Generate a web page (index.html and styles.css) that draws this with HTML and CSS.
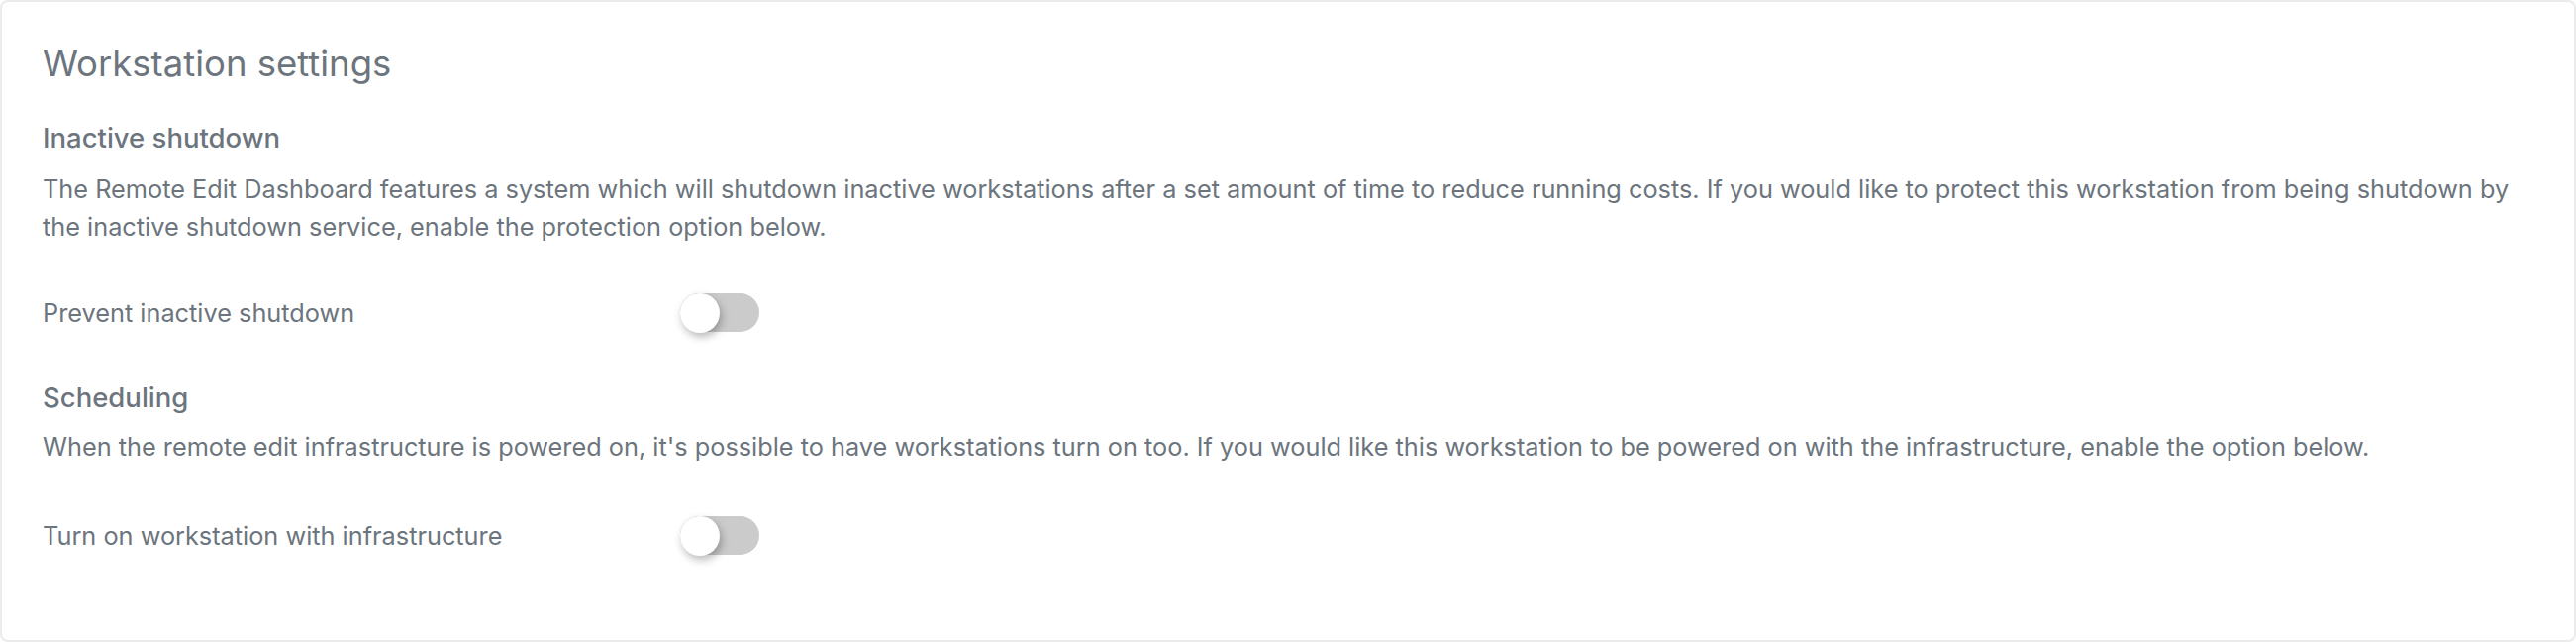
FILE: index.html
```html
<!DOCTYPE html>
<html lang="en">
<head>
  <meta charset="UTF-8" />
  <meta name="viewport" content="width=device-width, initial-scale=1.0"/>
  <title>Workstation settings</title>
  <link rel="stylesheet" href="styles.css">
</head>
<body>
  <div class="card">
    <h2 class="card-title">Workstation settings</h2>

    <!-- Inactive shutdown -->
    <h3 class="section-title">Inactive shutdown</h3>
    <p class="desc">The Remote Edit Dashboard features a system which will shutdown inactive workstations after a set amount of time to reduce running costs. If you would like to protect this workstation from being shutdown by the inactive shutdown service, enable the protection option below.</p>
    <div class="option">
      <label for="prevent-shutdown">Prevent inactive shutdown</label>
      <label class="switch">
        <input type="checkbox" id="prevent-shutdown">
        <span class="slider"></span>
      </label>
    </div>

    <!-- Scheduling -->
    <h3 class="section-title second">Scheduling</h3>
    <p class="desc short">When the remote edit infrastructure is powered on, it's possible to have workstations turn on too. If you would like this workstation to be powered on with the infrastructure, enable the option below.</p>
    <div class="option last">
      <label for="turn-on">Turn on workstation with infrastructure</label>
      <label class="switch">
        <input type="checkbox" id="turn-on">
        <span class="slider"></span>
      </label>
    </div>
  </div>
</body>
</html>
```

FILE: styles.css
```css
body { margin: 0; font-family: Inter, "Noto Sans", Arial, sans-serif; color: #6c757d; background: #fff; }
.card { height: 648px; box-sizing: border-box; border: 2px solid #ebebeb; border-radius: 8px; padding: 42px 41px 0; }
.card-title { font-size: 36.5px; line-height: 41px; font-weight: 400; margin: 0 0 35px; }
.section-title { font-size: 27.5px; line-height: 38px; font-weight: 500; margin: 0; }
.section-title.second { margin-top: 47px; }
.desc { font-size: 25.3px; line-height: 38px; margin: 14px 0 0; }
.desc.short { margin-top: 12px; }
.option { display: grid; grid-template-columns: 644px 1fr; align-items: center; height: 40px; margin-top: 47px; font-size: 25.3px; }
.option.last { margin-top: 50px; }
/* Toggle */
.switch { position: relative; display: inline-block; width: 80px; height: 39px; }
.switch input { opacity: 0; width: 0; height: 0; }
.slider { position: absolute; top: 0; left: 0; right: 0; bottom: 0; background: #cbcbcb; border-radius: 20px; cursor: pointer; }
.slider:before { content: ""; position: absolute; left: 0; top: 0; width: 40px; height: 40px; background: #fff; border-radius: 50%; box-shadow: 2px 4px 8px rgba(0,0,0,0.28); }
```
